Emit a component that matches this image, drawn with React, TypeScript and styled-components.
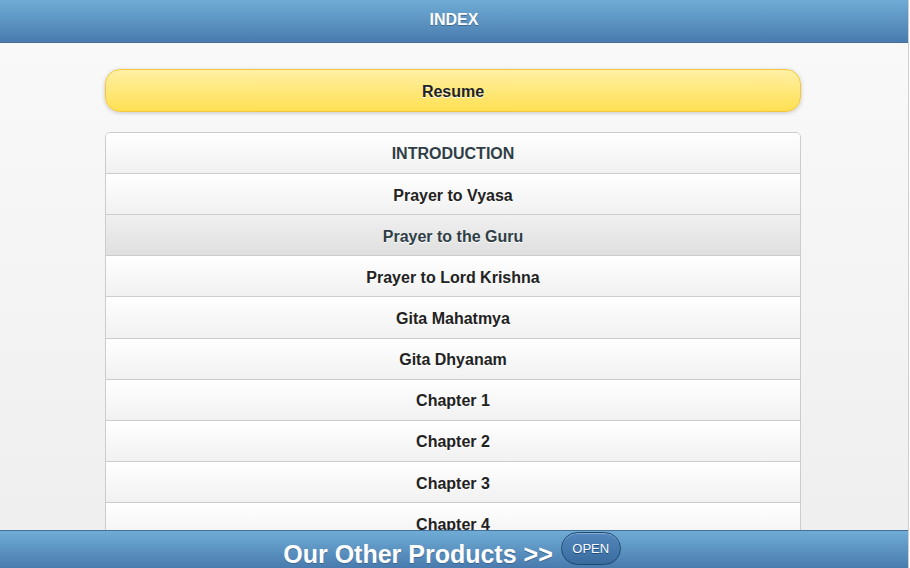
import React from "react"
import styled, { createGlobalStyle } from "styled-components"

const GlobalStyle = createGlobalStyle`
  html, body {
    margin: 0;
    padding: 0;
    background: #ffffff;
    font-family: "Liberation Sans", Arial, Helvetica, sans-serif;
  }
  * {
    box-sizing: border-box;
  }
`

const Page = styled.div`
  position: relative;
  width: 909px;
  height: 568px;
  overflow: hidden;
  background: #f9f9f9;
  border-right: 1px solid #cfcfcf;
  display: flex;
  flex-direction: column;
`

const Header = styled.div`
  height: 43px;
  flex-shrink: 0;
  display: flex;
  align-items: center;
  justify-content: center;
  background: linear-gradient(#6facd5, #497bae);
  border-bottom: 1px solid #456f9a;
  color: #ffffff;
  font-size: 16px;
  font-weight: bold;
  text-shadow: 0 1px 0 #3e6790;
  padding-bottom: 2px;
`

const Content = styled.div`
  flex: 1;
  padding: 26px 107px 0 105px;
  background: linear-gradient(#f9f9f9, #eeeeee);
`

const ResumeButton = styled.div`
  height: 43px;
  display: flex;
  align-items: center;
  justify-content: center;
  border: 1px solid #f4c63f;
  border-radius: 15px;
  background: linear-gradient(#fff0a5, #ffe052);
  box-shadow: 0 1px 4px rgba(0, 0, 0, 0.2);
  color: #222222;
  font-size: 16px;
  font-weight: bold;
  text-shadow: 0 1px 0 #ffffff;
  padding-top: 2px;
  cursor: pointer;
`

const List = styled.ul`
  list-style: none;
  margin: 20px 0 0 0;
  padding: 0;
  border: 1px solid #cccccc;
  border-radius: 5px 5px 0 0;
  overflow: hidden;
`

const Row = styled.li<{ active?: boolean; divider?: boolean }>`
  height: 41.15px;
  display: flex;
  align-items: center;
  justify-content: center;
  border-top: 1px solid #cccccc;
  background: ${p =>
    p.active
      ? "linear-gradient(#f0f0f0, #dfdfdf)"
      : "linear-gradient(#ffffff, #f1f1f1)"};
  color: ${p => (p.divider || p.active ? "#2f3e46" : "#222222")};
  font-size: 16px;
  font-weight: bold;
  text-shadow: 0 1px 0 #ffffff;
  padding-top: 3px;
  cursor: pointer;
  &:first-child {
    border-top: none;
    height: 40px;
    padding-top: 2px;
  }
`

const Footer = styled.div`
  position: absolute;
  left: 0;
  bottom: 0;
  width: 908px;
  height: 38px;
  display: flex;
  align-items: center;
  justify-content: center;
  gap: 8px;
  background: linear-gradient(#6facd5, #497bae);
  border-top: 1px solid #456f9a;
  padding-right: 4px;
`

const FooterText = styled.span`
  color: #ffffff;
  font-size: 25px;
  font-weight: bold;
  text-shadow: 0 1px 0 #3e6790;
  margin-top: 9px;
`

const OpenButton = styled.div`
  width: 60px;
  height: 33px;
  margin-top: -2px;
  display: flex;
  align-items: center;
  justify-content: center;
  border: 1px solid #1e4a70;
  border-radius: 17px;
  background: linear-gradient(#5387bd, #396b9e);
  box-shadow: inset 0 1px 0 rgba(255, 255, 255, 0.3);
  color: #ffffff;
  font-size: 13px;
  font-weight: normal;
  text-shadow: 0 1px 0 #194b7e;
  cursor: pointer;
`

const items = [
  "INTRODUCTION",
  "Prayer to Vyasa",
  "Prayer to the Guru",
  "Prayer to Lord Krishna",
  "Gita Mahatmya",
  "Gita Dhyanam",
  "Chapter 1",
  "Chapter 2",
  "Chapter 3",
  "Chapter 4",
]

const App: React.FC = () => {
  return (
    <>
      <GlobalStyle />
      <Page>
        <Header>INDEX</Header>
        <Content>
          <ResumeButton>Resume</ResumeButton>
          <List>
            {items.map((item, index) => (
              <Row key={index} divider={index === 0} active={index === 2}>
                {item}
              </Row>
            ))}
          </List>
        </Content>
        <Footer>
          <FooterText>Our Other Products &gt;&gt;</FooterText>
          <OpenButton>OPEN</OpenButton>
        </Footer>
      </Page>
    </>
  )
}

export default App
